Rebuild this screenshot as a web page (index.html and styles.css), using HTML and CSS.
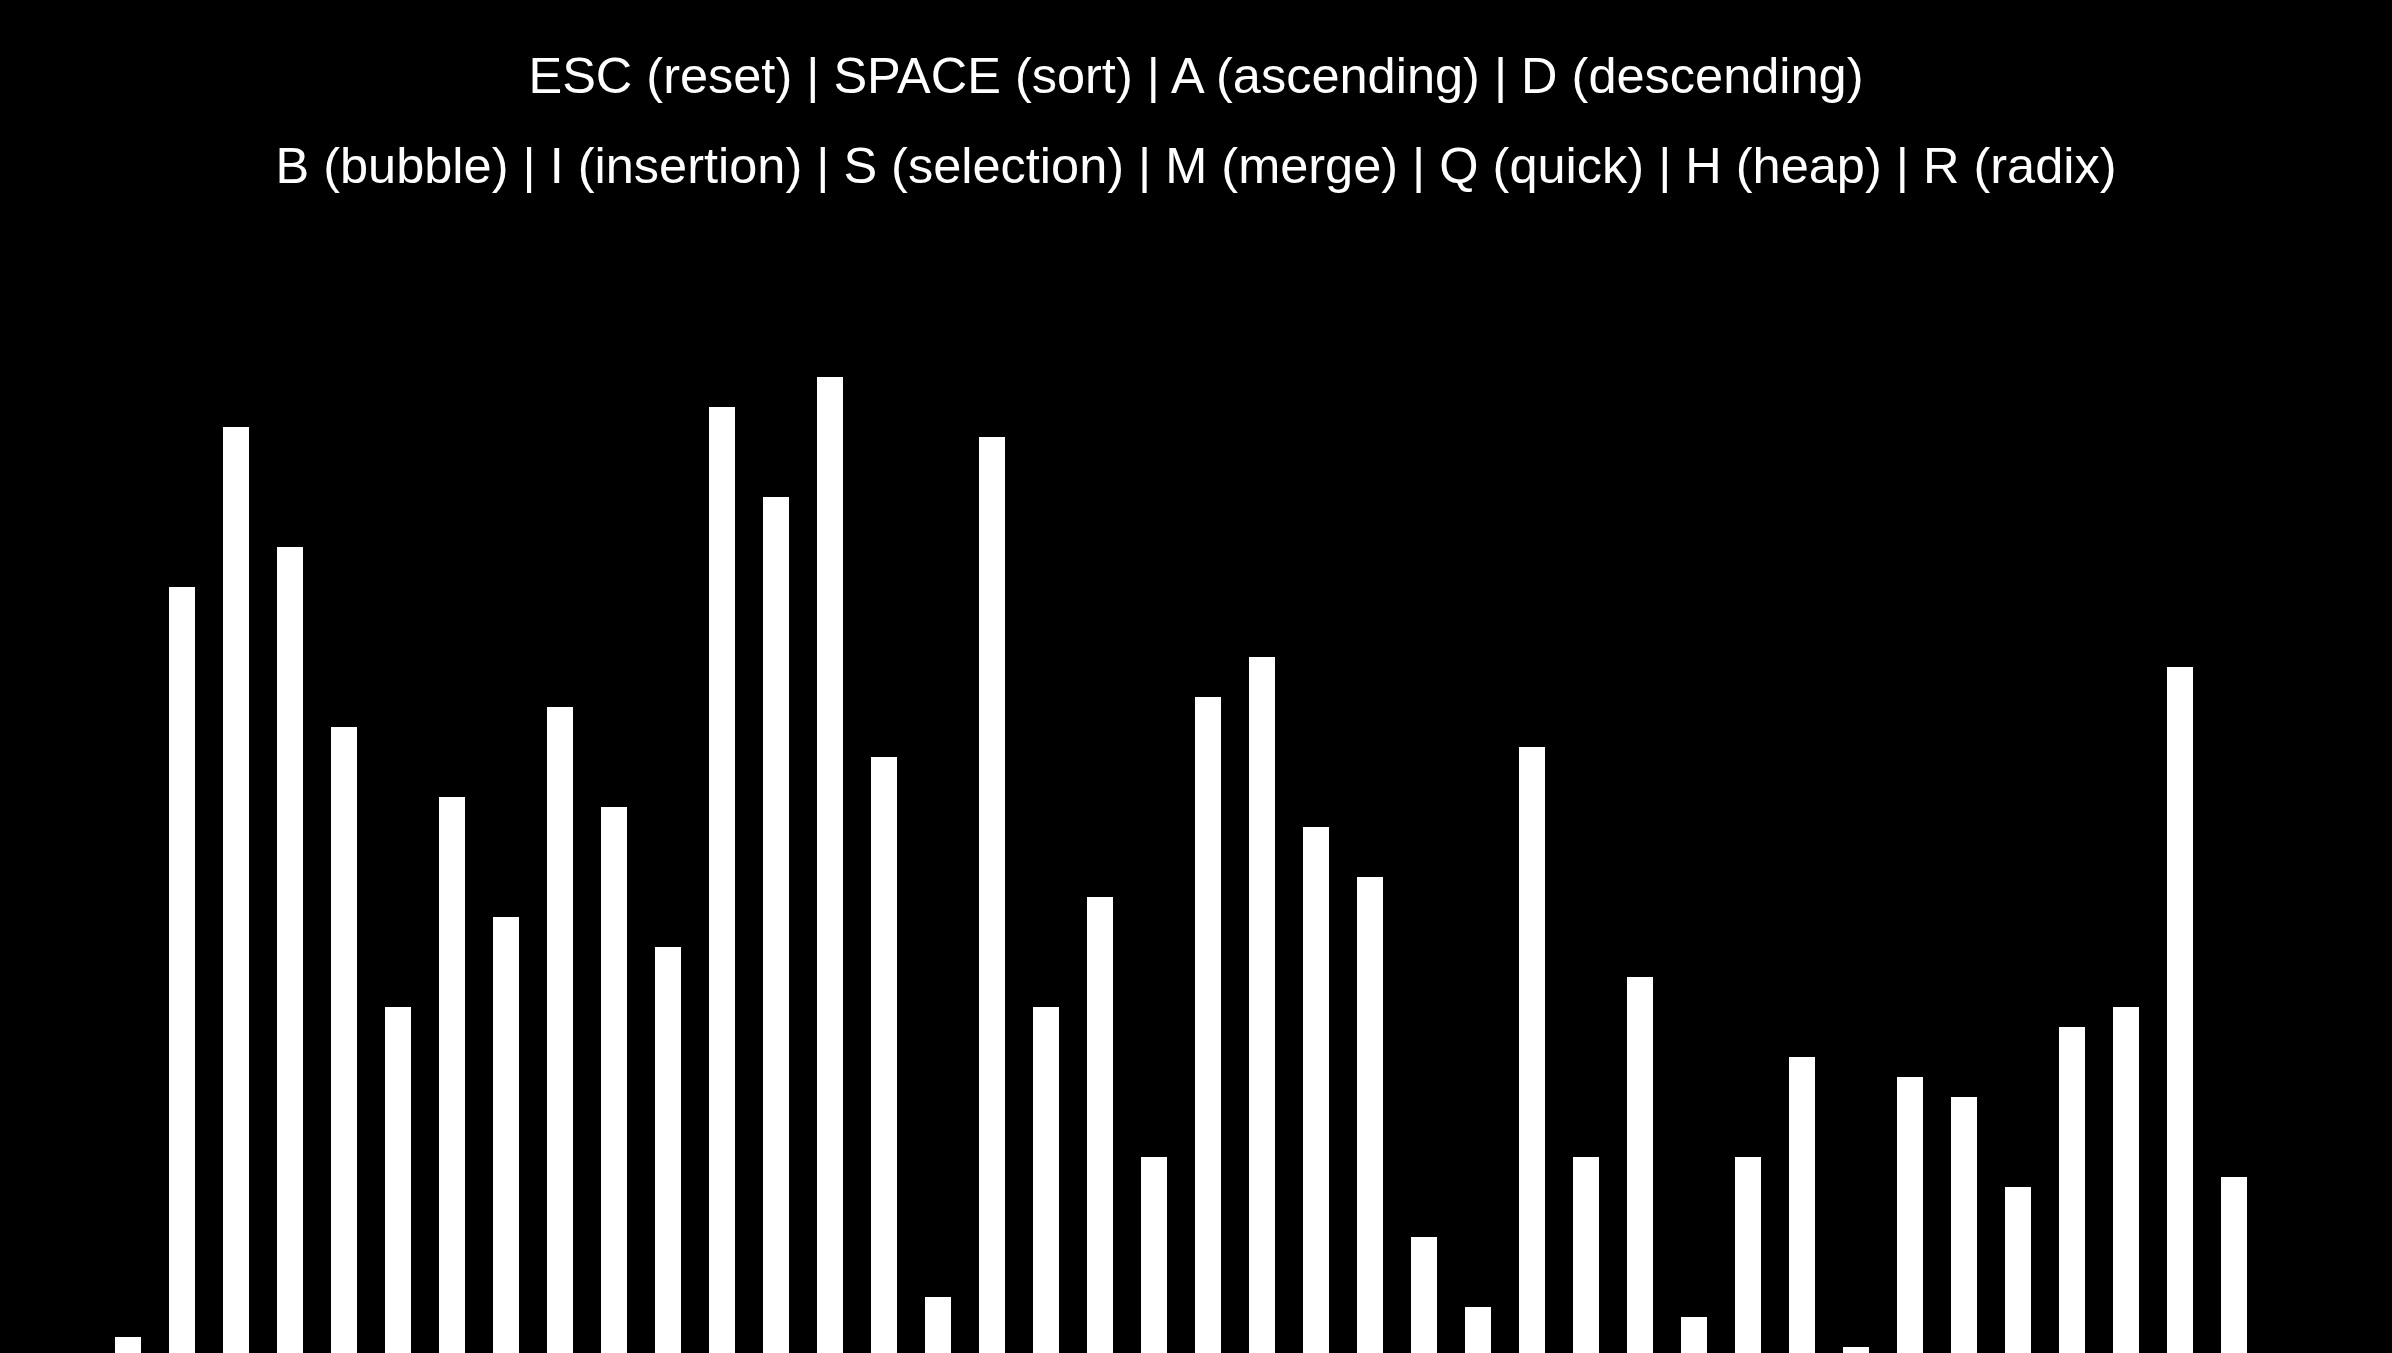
FILE: index.html
```html
<!DOCTYPE html>
<html lang="en">
  <head>
    <meta charset="UTF-8" />
    <meta name="viewport" content="width=device-width, initial-scale=1.0" />
    <title>Sorting Visualizer</title>
    <link rel="stylesheet" href="styles.css">
  </head>
  <body>
    <div class="help">
      <p>ESC (reset) | SPACE (sort) | A (ascending) | D (descending)</p>
      <p>B (bubble) | I (insertion) | S (selection) | M (merge) | Q (quick) | H (heap) | R (radix)</p>
    </div>

    <div class="bars">
      <div class="bar" style="height: 16px"></div>
      <div class="bar" style="height: 766px"></div>
      <div class="bar" style="height: 926px"></div>
      <div class="bar" style="height: 806px"></div>
      <div class="bar" style="height: 626px"></div>
      <div class="bar" style="height: 346px"></div>
      <div class="bar" style="height: 556px"></div>
      <div class="bar" style="height: 436px"></div>
      <div class="bar" style="height: 646px"></div>
      <div class="bar" style="height: 546px"></div>
      <div class="bar" style="height: 406px"></div>
      <div class="bar" style="height: 946px"></div>
      <div class="bar" style="height: 856px"></div>
      <div class="bar" style="height: 976px"></div>
      <div class="bar" style="height: 596px"></div>
      <div class="bar" style="height: 56px"></div>
      <div class="bar" style="height: 916px"></div>
      <div class="bar" style="height: 346px"></div>
      <div class="bar" style="height: 456px"></div>
      <div class="bar" style="height: 196px"></div>
      <div class="bar" style="height: 656px"></div>
      <div class="bar" style="height: 696px"></div>
      <div class="bar" style="height: 526px"></div>
      <div class="bar" style="height: 476px"></div>
      <div class="bar" style="height: 116px"></div>
      <div class="bar" style="height: 46px"></div>
      <div class="bar" style="height: 606px"></div>
      <div class="bar" style="height: 196px"></div>
      <div class="bar" style="height: 376px"></div>
      <div class="bar" style="height: 36px"></div>
      <div class="bar" style="height: 196px"></div>
      <div class="bar" style="height: 296px"></div>
      <div class="bar" style="height: 6px"></div>
      <div class="bar" style="height: 276px"></div>
      <div class="bar" style="height: 256px"></div>
      <div class="bar" style="height: 166px"></div>
      <div class="bar" style="height: 326px"></div>
      <div class="bar" style="height: 346px"></div>
      <div class="bar" style="height: 686px"></div>
      <div class="bar" style="height: 176px"></div>
    </div>
  </body>
</html>
```

FILE: styles.css
```css
html,
body {
  margin: 0;
  height: 100%;
}
body {
  background-color: #000;
  color: #fff;
  font-family: "Liberation Sans", Arial, sans-serif;
  display: flex;
  flex-direction: column;
  overflow: hidden;
}
.help {
  padding-top: 31px;
  text-align: center;
  font-size: 50.5px;
  line-height: 90px;
}
.help p {
  margin: 0;
  white-space: nowrap;
}
.bars {
  flex: 1;
  display: flex;
  align-items: flex-end;
  gap: 28px;
  padding-left: 115px;
}
.bar {
  width: 26px;
  flex-shrink: 0;
  background-color: #fff;
}
```
